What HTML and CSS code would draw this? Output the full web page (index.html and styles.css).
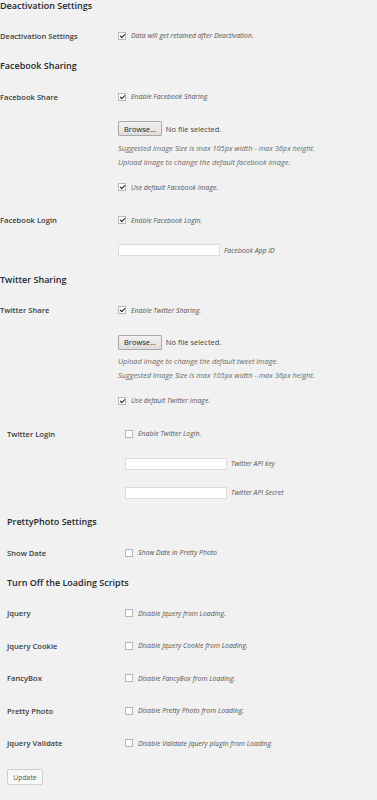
FILE: index.html
```html
<!DOCTYPE html>
<html lang="en">
<head>
  <meta charset="UTF-8">
  <meta name="viewport" content="width=device-width, initial-scale=1.0">
  <title>Plugin Settings</title>
  <link rel="stylesheet" href="styles.css">
</head>
<body>

  <form class="settings">
    <h3 class="section-title first">Deactivation Settings</h3>
    <div class="form-row">
      <div class="row-label">Deactivation Settings</div>
      <div class="row-field">
        <label class="check"><input type="checkbox" checked> Data will get retained after Deactivation.</label>
      </div>
    </div>

    <h3 class="section-title">Facebook Sharing</h3>
    <div class="form-row">
      <div class="row-label">Facebook Share</div>
      <div class="row-field">
        <label class="check"><input type="checkbox" checked> Enable Facebook Sharing.</label>
        <div class="upload">
          <button type="button" class="browse">Browse…</button>
          <span>No file selected.</span>
        </div>
        <p class="description">Suggested Image Size is max 105px width - max 36px height.<br>Upload image to change the default facebook image.</p>
        <label class="check sub-check"><input type="checkbox" checked> Use default Facebook image.</label>
      </div>
    </div>
    <div class="form-row">
      <div class="row-label">Facebook Login</div>
      <div class="row-field">
        <label class="check"><input type="checkbox" checked> Enable Facebook Login.</label>
        <div class="field-input">
          <input type="text" class="text-input">
          <span class="input-note">Facebook App ID</span>
        </div>
      </div>
    </div>

    <h3 class="section-title">Twitter Sharing</h3>
    <div class="form-row">
      <div class="row-label">Twitter Share</div>
      <div class="row-field">
        <label class="check"><input type="checkbox" checked> Enable Twitter Sharing.</label>
        <div class="upload">
          <button type="button" class="browse">Browse…</button>
          <span>No file selected.</span>
        </div>
        <p class="description">Upload image to change the default tweet image.<br>Suggested Image Size is max 105px width - max 36px height.</p>
        <label class="check sub-check"><input type="checkbox" checked> Use default Twitter image.</label>
      </div>
    </div>

    <div class="indented">
      <div class="form-row">
        <div class="row-label">Twitter Login</div>
        <div class="row-field">
          <label class="check"><input type="checkbox"> Enable Twitter Login.</label>
          <div class="field-input">
            <input type="text" class="text-input">
            <span class="input-note">Twitter API key</span>
          </div>
          <div class="field-input">
            <input type="text" class="text-input">
            <span class="input-note">Twitter API Secret</span>
          </div>
        </div>
      </div>

      <h3 class="section-title">PrettyPhoto Settings</h3>
      <div class="form-row">
        <div class="row-label">Show Date</div>
        <div class="row-field">
          <label class="check"><input type="checkbox"> Show Date in Pretty Photo</label>
        </div>
      </div>

      <h3 class="section-title">Turn Off the Loading Scripts</h3>
      <div class="script-list">
        <div class="form-row">
          <div class="row-label">Jquery</div>
          <div class="row-field">
            <label class="check"><input type="checkbox"> Disable Jquery from Loading.</label>
          </div>
        </div>
        <div class="form-row">
          <div class="row-label">Jquery Cookie</div>
          <div class="row-field">
            <label class="check"><input type="checkbox"> Disable Jquery Cookie from Loading.</label>
          </div>
        </div>
        <div class="form-row">
          <div class="row-label">FancyBox</div>
          <div class="row-field">
            <label class="check"><input type="checkbox"> Disable FancyBox from Loading.</label>
          </div>
        </div>
        <div class="form-row">
          <div class="row-label">Pretty Photo</div>
          <div class="row-field">
            <label class="check"><input type="checkbox"> Disable Pretty Photo from Loading.</label>
          </div>
        </div>
        <div class="form-row">
          <div class="row-label">Jquery Validate</div>
          <div class="row-field">
            <label class="check"><input type="checkbox"> Disable Validate jquery plugin from Loading.</label>
          </div>
        </div>
      </div>

      <button type="submit" class="update">Update</button>
    </div>
  </form>

</body>
</html>
```

FILE: styles.css
```css
* {
  box-sizing: border-box;
}

body {
  margin: 0;
  background-color: #f1f1f1;
  font-family: 'Open Sans', 'Liberation Sans', sans-serif;
  color: #333;
}

.section-title {
  margin: 7px 0;
  font-size: 9px;
  font-weight: 600;
  line-height: 14px;
  color: #23282d;
}

.section-title.first {
  margin: 0 0 7px;
  line-height: 12px;
}

.form-row {
  display: flex;
  padding: 9.5px 0;
}

.script-list .form-row {
  padding: 9.25px 0;
}

.row-label {
  width: 118px;
  flex-shrink: 0;
  font-size: 7.6px;
  font-weight: 600;
  line-height: 14px;
  color: #3a3f44;
}

.row-field {
  display: flex;
  flex-direction: column;
  align-items: flex-start;
}

.check {
  display: flex;
  align-items: center;
  gap: 5px;
  height: 14px;
  font-size: 6.9px;
  font-style: italic;
  color: #555;
}

.check input {
  appearance: none;
  position: relative;
  flex-shrink: 0;
  width: 8px;
  height: 8px;
  margin: 0;
  border: 1px solid #b4b9be;
  background-color: #fff;
}

.check input:checked::after {
  content: "";
  position: absolute;
  left: 2px;
  top: 0;
  width: 2px;
  height: 4px;
  border: solid #1e1e1e;
  border-width: 0 1.3px 1.3px 0;
  transform: rotate(45deg);
}

.sub-check {
  margin-top: 11.5px;
}

.upload {
  display: flex;
  align-items: center;
  gap: 4px;
  margin-top: 17.5px;
  font-size: 7.5px;
  color: #444;
}

.browse {
  height: 15px;
  padding: 0 5px;
  font-family: inherit;
  font-size: 7.5px;
  color: #222;
  border: 1px solid #a9a9a9;
  border-radius: 1px;
  background: linear-gradient(#f2f2f2, #dddddd);
}

.description {
  margin: 4.5px 0 0;
  font-size: 7.4px;
  font-style: italic;
  line-height: 14px;
  color: #6a6a6a;
}

.field-input {
  display: flex;
  align-items: center;
  gap: 4px;
  margin-top: 17px;
}

.text-input {
  width: 102px;
  height: 12px;
  margin: 0;
  padding: 0;
  border: 1px solid #dcdcdc;
  background-color: #fff;
}

.input-note {
  font-size: 6.9px;
  font-style: italic;
  color: #555;
}

.indented {
  padding-left: 7px;
}

.update {
  width: 36px;
  height: 16px;
  margin-top: 9.5px;
  padding: 0;
  font-family: inherit;
  font-size: 6.8px;
  color: #555;
  border: 1px solid #cfcfcf;
  border-radius: 2px;
  background-color: #f7f7f7;
}
```
